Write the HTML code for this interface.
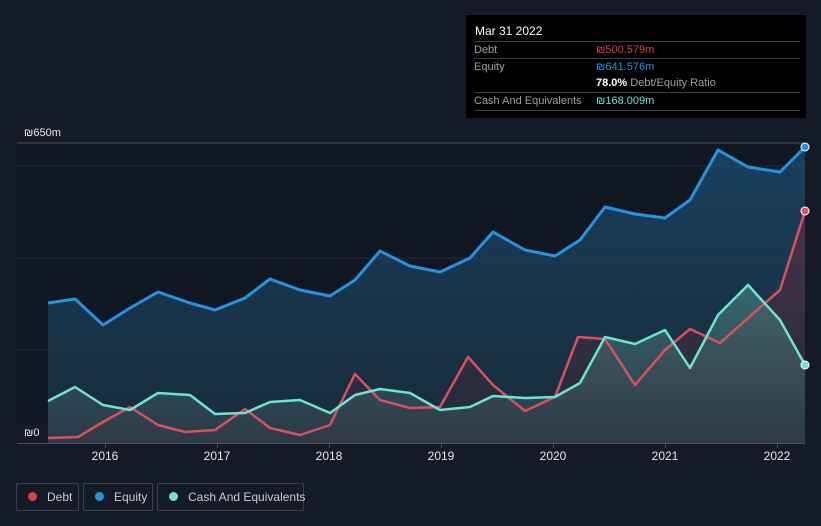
<!DOCTYPE html>
<html><head><meta charset="utf-8"><style>
body{margin:0;width:821px;height:526px;background:#151b26;font-family:"Liberation Sans",sans-serif;overflow:hidden;position:relative}
.tt{position:absolute;left:466px;top:15px;width:340px;height:103px;background:#000;color:#fff;font-size:11px}
.row{position:absolute;left:8px;width:326px;border-top:1px solid #3a3f48;height:17px;line-height:17px}
.row .l{color:#9aa0a8;position:absolute;left:0}
.row .v{position:absolute;left:122px}
.leg{position:absolute;top:483px;height:28px;box-sizing:border-box;border:1px solid #3a3f48;border-radius:2px;color:#c8ccd2;font-size:12px;line-height:26px;white-space:nowrap}
.leg i{display:inline-block;width:9px;height:9px;border-radius:50%;margin:0 10px 0 11px}
.yr{position:absolute;top:449px;color:#e6e8eb;font-size:12px;width:40px;text-align:center}
</style></head><body>
<svg width="821" height="526" style="position:absolute;left:0;top:0">
<defs>
<linearGradient id="ge" x1="0" y1="0" x2="0" y2="1"><stop offset="0" stop-color="#1c4a6c" stop-opacity=".8"/><stop offset="1" stop-color="#1a3346" stop-opacity=".7"/></linearGradient>
<linearGradient id="gd" x1="0" y1="0" x2="0" y2="1"><stop offset="0" stop-color="#6b2b3c" stop-opacity=".6"/><stop offset="1" stop-color="#3a2a36" stop-opacity=".3"/></linearGradient>
<linearGradient id="gc" x1="0" y1="0" x2="0" y2="1"><stop offset="0" stop-color="#4a8a84" stop-opacity=".6"/><stop offset="1" stop-color="#3a4a52" stop-opacity=".5"/></linearGradient>
</defs>
<rect x="17" y="143" width="788" height="300" fill="#111722"/>
<line x1="17" y1="143" x2="805" y2="143" stroke="#4a505a"/>
<line x1="17" y1="166" x2="805" y2="166" stroke="#262c36"/>
<line x1="17" y1="258" x2="805" y2="258" stroke="#262c36"/>
<line x1="17" y1="350" x2="805" y2="350" stroke="#262c36"/>
<path fill="url(#ge)" d="M48,303 L75,299 103,325 130,308 158,292 190,303 215,310 245,298 270,279 300,290 330,296 355,280 380,251 410,266 440,272 470,258 493,232 525,250 555,256 580,240 605,207 635,214 665,218 690,200 718,150 748,167 780,172 805,147 L805,443 48,443Z"/>
<path fill="url(#gd)" d="M48,438 L78,437 103,422 130,407 158,425 185,432 215,430 245,409 270,428 300,435 330,425 355,374 380,400 410,408 440,407 468,357 493,385 525,411 555,397 578,337 605,339 635,385 665,350 690,329 720,343 748,318 780,290 805,211 L805,443 48,443Z"/>
<path fill="url(#gc)" d="M48,401 L75,387 103,405 130,410 158,393 190,395 215,414 245,413 270,402 300,400 330,413 355,395 380,389 410,393 440,410 470,407 493,396 525,398 555,397 580,383 605,337 635,344 665,330 690,368 718,315 748,285 780,320 805,365 L805,443 48,443Z"/>
<polyline fill="none" stroke="#2394df" stroke-width="3" stroke-linejoin="round" points="48,303 75,299 103,325 130,308 158,292 190,303 215,310 245,298 270,279 300,290 330,296 355,280 380,251 410,266 440,272 470,258 493,232 525,250 555,256 580,240 605,207 635,214 665,218 690,200 718,150 748,167 780,172 805,147"/>
<polyline fill="none" stroke="#d9505e" stroke-width="2.5" stroke-linejoin="round" points="48,438 78,437 103,422 130,407 158,425 185,432 215,430 245,409 270,428 300,435 330,425 355,374 380,400 410,408 440,407 468,357 493,385 525,411 555,397 578,337 605,339 635,385 665,350 690,329 720,343 748,318 780,290 805,211"/>
<polyline fill="none" stroke="#6ee3cf" stroke-width="2.5" stroke-linejoin="round" points="48,401 75,387 103,405 130,410 158,393 190,395 215,414 245,413 270,402 300,400 330,413 355,395 380,389 410,393 440,410 470,407 493,396 525,398 555,397 580,383 605,337 635,344 665,330 690,368 718,315 748,285 780,320 805,365"/>
<circle cx="805" cy="147" r="4" fill="#2394df" stroke="#fff" stroke-width="1"/>
<circle cx="805" cy="211" r="4" fill="#d9505e" stroke="#fff" stroke-width="1"/>
<circle cx="805" cy="365" r="4" fill="#6ee3cf" stroke="#fff" stroke-width="1"/>
<rect x="17" y="425" width="31" height="18" fill="#151b26"/>
<line x1="17" y1="443.5" x2="805" y2="443.5" stroke="#4a505a"/>
<g stroke="#4a505a"><line x1="105.5" y1="443" x2="105.5" y2="448"/><line x1="217.5" y1="443" x2="217.5" y2="448"/><line x1="329.5" y1="443" x2="329.5" y2="448"/><line x1="441.5" y1="443" x2="441.5" y2="448"/><line x1="553.5" y1="443" x2="553.5" y2="448"/><line x1="665.5" y1="443" x2="665.5" y2="448"/><line x1="777.5" y1="443" x2="777.5" y2="448"/></g>
<text x="24" y="136" fill="#e6e8eb" font-size="11" font-family="Liberation Sans, sans-serif">₪650m</text>
<text x="24" y="436" fill="#e6e8eb" font-size="11" font-family="Liberation Sans, sans-serif">₪0</text>
</svg>
<div class="yr" style="left:85px">2016</div><div class="yr" style="left:197px">2017</div><div class="yr" style="left:309px">2018</div><div class="yr" style="left:421px">2019</div><div class="yr" style="left:533px">2020</div><div class="yr" style="left:645px">2021</div><div class="yr" style="left:757px">2022</div>
<div class="tt">
<div style="position:absolute;left:9px;top:9px;font-size:12px">Mar 31 2022</div>
<div class="row" style="top:26px"><span class="l">Debt</span><span class="v" style="color:#e0404c">₪500.579m</span></div>
<div class="row" style="top:43px"><span class="l">Equity</span><span class="v" style="color:#2394df">₪641.576m</span></div>
<div class="row" style="top:60px;border-top:none"><span class="v"><b>78.0%</b> <span style="color:#9aa0a8">Debt/Equity Ratio</span></span></div>
<div class="row" style="top:77px"><span class="l">Cash And Equivalents</span><span class="v" style="color:#6ee3cf">₪168.009m</span></div>
<div class="row" style="top:95px;height:0"></div>
</div>
<div class="leg" style="left:16px;width:63px"><i style="background:#e0404c"></i>Debt</div>
<div class="leg" style="left:83px;width:70px"><i style="background:#2394df"></i>Equity</div>
<div class="leg" style="left:157px;width:147px"><i style="background:#6ee3cf"></i>Cash And Equivalents</div>
</body></html>
